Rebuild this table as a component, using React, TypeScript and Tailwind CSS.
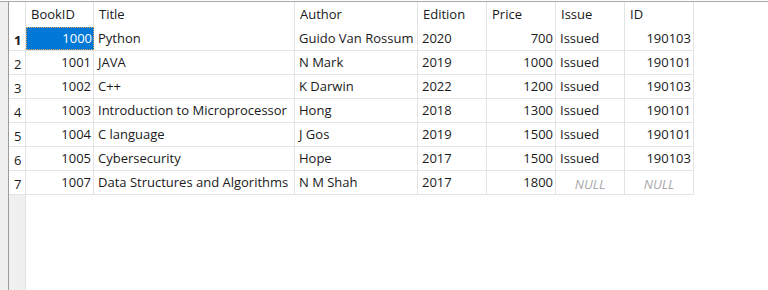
type Book = {
  id: number;
  title: string;
  author: string;
  edition: number;
  price: number;
  issue: string | null;
  sid: number | null;
};

const books: Book[] = [
  { id: 1000, title: "Python", author: "Guido Van Rossum", edition: 2020, price: 700, issue: "Issued", sid: 190103 },
  { id: 1001, title: "JAVA", author: "N Mark", edition: 2019, price: 1000, issue: "Issued", sid: 190101 },
  { id: 1002, title: "C++", author: "K Darwin", edition: 2022, price: 1200, issue: "Issued", sid: 190103 },
  { id: 1003, title: "Introduction to Microprocessor", author: "Hong", edition: 2018, price: 1300, issue: "Issued", sid: 190101 },
  { id: 1004, title: "C language", author: "J Gos", edition: 2019, price: 1500, issue: "Issued", sid: 190101 },
  { id: 1005, title: "Cybersecurity", author: "Hope", edition: 2017, price: 1500, issue: "Issued", sid: 190103 },
  { id: 1007, title: "Data Structures and Algorithms", author: "N M Shah", edition: 2017, price: 1800, issue: null, sid: null },
];

// header cells, widths include the 1px right grid line
const cols = [
  { name: "BookID", w: "w-[68px]" },
  { name: "Title", w: "w-[201px]" },
  { name: "Author", w: "w-[123px]" },
  { name: "Edition", w: "w-[69px]" },
  { name: "Price", w: "w-[69px]" },
  { name: "Issue", w: "w-[69px]" },
  { name: "ID", w: "w-[69px]" },
];

function Null({ w }: { w: string }) {
  return (
    <div className={`${w} flex items-center justify-center border-r border-[#e3e3e3] italic text-[#a8a8a8]`}>
      <span className="translate-y-[2px]">NULL</span>
    </div>
  );
}

export default function App() {
  return (
    <div
      className="h-[290px] w-[768px] overflow-hidden bg-white pt-px text-[13px] text-[#1a1a1a]"
      style={{ fontFamily: '"Segoe UI", "Open Sans", sans-serif' }}
    >
      <div className="flex h-full border-t border-[#a9a9a9]">
        {/* left strip */}
        <div className="w-[9px] border-r border-[#9c9c9c] bg-[#f0f0f0]" />

        {/* row headers */}
        <div className="flex w-[17px] flex-col border-r border-[#e3e3e3]">
          <div className="h-[25px] bg-white" />
          {books.map((b, i) => (
            <div
              key={b.id}
              className={`flex h-[24px] items-center border-b border-[#e3e3e3] bg-white pl-[5px] pt-[5px] ${i === 0 ? "font-bold" : ""}`}
            >
              {i + 1}
            </div>
          ))}
          <div className="flex-1 bg-[#f0f0f0]" />
        </div>

        {/* grid */}
        <div className="flex flex-col">
          <div className="flex h-[25px]">
            {cols.map((c) => (
              <div key={c.name} className={`${c.w} flex items-center border-r border-[#e3e3e3] pl-[5px]`}>
                {c.name}
              </div>
            ))}
          </div>
          {books.map((b, i) => (
            <div key={b.id} className="flex h-[24px] border-b border-[#e3e3e3]">
              {i === 0 ? (
                <div className="flex w-[68px] items-center justify-end border border-dotted border-[#d9a35a] bg-[#0078d7] pr-[1px] text-white">
                  {b.id}
                </div>
              ) : (
                <div className="flex w-[68px] items-center justify-end border-r border-[#e3e3e3] pr-[2px]">{b.id}</div>
              )}
              <div className="flex w-[201px] items-center border-r border-[#e3e3e3] pl-[4px]">{b.title}</div>
              <div className="flex w-[123px] items-center border-r border-[#e3e3e3] pl-[4px]">{b.author}</div>
              <div className="flex w-[69px] items-center border-r border-[#e3e3e3] pl-[4px]">{b.edition}</div>
              <div className="flex w-[69px] items-center justify-end border-r border-[#e3e3e3] pr-[2px]">{b.price}</div>
              {b.issue ? (
                <div className="flex w-[69px] items-center border-r border-[#e3e3e3] pl-[4px]">{b.issue}</div>
              ) : (
                <Null w="w-[69px]" />
              )}
              {b.sid ? (
                <div className="flex w-[69px] items-center justify-end border-r border-[#e3e3e3] pr-[2px]">{b.sid}</div>
              ) : (
                <Null w="w-[69px]" />
              )}
            </div>
          ))}
        </div>
      </div>
    </div>
  );
}
